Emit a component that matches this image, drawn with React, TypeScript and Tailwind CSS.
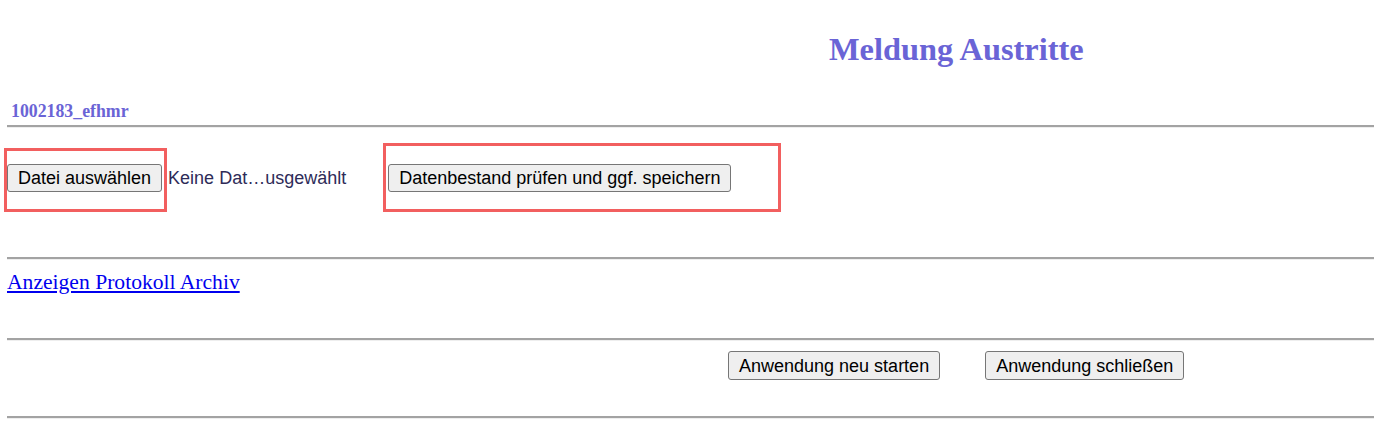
import React from "react";

function Rule() {
  return <div className="ml-[7px] border-t-2 border-b border-t-[#a3a3a3] border-b-[#eeeeee]" />;
}

function Btn({ label, tall }: { label: string; tall?: boolean }) {
  return (
    <button
      className={`${tall ? "h-[29px]" : "h-[28px]"} px-[10px] bg-[#efefef] border border-[#767676] rounded-[3px] text-[18px] leading-none text-black whitespace-nowrap`}
      style={{ fontFamily: '"Liberation Sans", Arial, sans-serif' }}
    >
      {label}
    </button>
  );
}

export default function App() {
  return (
    <div className="w-[1374px] bg-white" style={{ fontFamily: '"Liberation Serif", "Times New Roman", serif' }}>
      {/* Title */}
      <div className="pt-[31px] pl-[829px]">
        <h1 className="text-[32.4px] leading-[37px] font-bold text-[#6a64d6] whitespace-nowrap">Meldung Austritte</h1>
      </div>

      {/* User id */}
      <div className="mt-[33px] pl-[11px] text-[17.8px] leading-[21px] font-bold text-[#6a64d6]">1002183_efhmr</div>

      <div className="mt-[3px]">
        <Rule />
      </div>

      {/* Upload row */}
      <div className="relative mt-[36px] flex items-center pl-[7px]">
        <Btn label="Datei auswählen" />
        <span
          className="ml-[6px] text-[18px] text-[#2e2b58] whitespace-nowrap"
          style={{ fontFamily: '"Liberation Sans", Arial, sans-serif' }}
        >
          Keine Dat…usgewählt
        </span>
        <div className="ml-[42px]">
          <Btn label="Datenbestand prüfen und ggf. speichern" />
        </div>

        {/* annotation boxes */}
        <div className="absolute left-[4px] top-[-16px] w-[163px] h-[64px] border-[3px] border-[#f25f5f] pointer-events-none" />
        <div className="absolute left-[383px] top-[-21px] w-[398px] h-[69px] border-[3px] border-[#f25f5f] pointer-events-none" />
      </div>

      <div className="mt-[65px]">
        <Rule />
      </div>

      {/* Link */}
      <div className="mt-[10px] pl-[7px] text-[21.6px] leading-[25px]">
        <a href="#" className="text-[#0000ee] underline">Anzeigen Protokoll Archiv</a>
      </div>

      <div className="mt-[43px]">
        <Rule />
      </div>

      {/* Footer buttons */}
      <div className="mt-[10px] flex gap-[45px] pl-[728px]">
        <Btn label="Anwendung neu starten" tall />
        <Btn label="Anwendung schließen" tall />
      </div>

      <div className="mt-[36px] pb-[8px]">
        <Rule />
      </div>
    </div>
  );
}
